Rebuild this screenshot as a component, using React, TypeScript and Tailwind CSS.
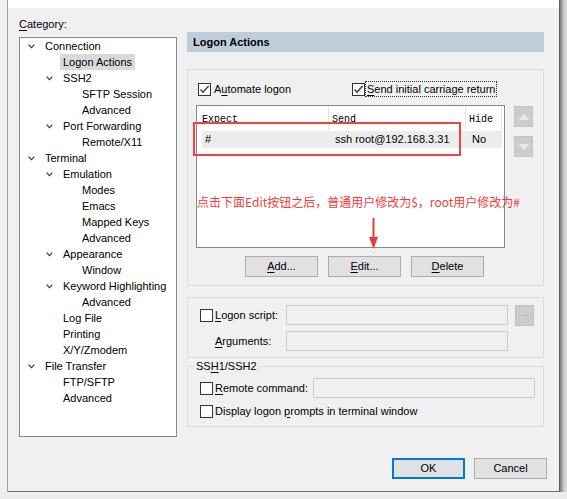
import type * as React from "react";

type Node = { t: string; l: 0 | 1 | 2; c?: boolean; sel?: boolean };

const tree: Node[] = [
  { t: "Connection", l: 0, c: true },
  { t: "Logon Actions", l: 1, sel: true },
  { t: "SSH2", l: 1, c: true },
  { t: "SFTP Session", l: 2 },
  { t: "Advanced", l: 2 },
  { t: "Port Forwarding", l: 1, c: true },
  { t: "Remote/X11", l: 2 },
  { t: "Terminal", l: 0, c: true },
  { t: "Emulation", l: 1, c: true },
  { t: "Modes", l: 2 },
  { t: "Emacs", l: 2 },
  { t: "Mapped Keys", l: 2 },
  { t: "Advanced", l: 2 },
  { t: "Appearance", l: 1, c: true },
  { t: "Window", l: 2 },
  { t: "Keyword Highlighting", l: 1, c: true },
  { t: "Advanced", l: 2 },
  { t: "Log File", l: 1 },
  { t: "Printing", l: 1 },
  { t: "X/Y/Zmodem", l: 1 },
  { t: "File Transfer", l: 0, c: true },
  { t: "FTP/SFTP", l: 1 },
  { t: "Advanced", l: 1 },
];

const indent = ["pl-[8px]", "pl-[26px]", "pl-[45px]"];

function Chevron() {
  return (
    <svg width="8" height="5" viewBox="0 0 8 5" className="block">
      <polyline points="0.6,0.6 3.5,3.6 6.4,0.6" fill="none" stroke="#3c3c3c" strokeWidth="1.2" />
    </svg>
  );
}

function Check({ on = false }: { on?: boolean }) {
  return (
    <span className="inline-flex h-[13px] w-[13px] shrink-0 items-center justify-center border border-[#333] bg-white">
      {on ? (
        <svg width="11" height="11" viewBox="0 0 11 11">
          <polyline points="1.5,5.5 4,8.2 9.6,2" fill="none" stroke="#3a3a3a" strokeWidth="1.3" />
        </svg>
      ) : null}
    </span>
  );
}

function U({ children }: { children: React.ReactNode }) {
  return <span className="underline underline-offset-[2px]">{children}</span>;
}

function Btn({ children, def = false }: { children: React.ReactNode; def?: boolean }) {
  return (
    <div
      className={
        def
          ? "flex h-[21px] w-[73px] items-center justify-center border-2 border-[#0078d7] bg-[#e1e1e1]"
          : "flex h-[21px] w-[73px] items-center justify-center border border-[#adadad] bg-[#e1e1e1]"
      }
    >
      {children}
    </div>
  );
}

function Field({ w }: { w: string }) {
  return <div className={`h-[20px] border border-[#cccccc] bg-[#f0f0f0] ${w}`} />;
}

function Arrow({ up }: { up?: boolean }) {
  return (
    <div className="flex h-[21px] w-[19px] items-center justify-center border border-[#c4c4c4] bg-[#cccccc]">
      <svg width="10" height="6" viewBox="0 0 10 6">
        <polygon points={up ? "0,6 10,6 5,0" : "0,0 10,0 5,6"} fill="#ececec" />
      </svg>
    </div>
  );
}

export default function App() {
  return (
    <div className="relative flex h-[499px] w-[567px] flex-col overflow-hidden bg-[#e8e8e8] font-['Liberation_Sans',Arial,sans-serif] text-[11px] text-black">
      <div className="flex h-[492px]">
        <div className="w-[7px] bg-[#f0f0f0]" />
        <div className="flex w-[553px] flex-col border-x border-b border-l-[#a0a0a0] border-r-[#5f5f5f] border-b-[#6f6f6f] bg-[#f0f0f0]">
          <div className="h-[8px] bg-white" />
          <div className="flex pl-[11px]">
            {/* category tree */}
            <div className="w-[158px] pt-[8px]">
              <div className="h-[16px] leading-[16px]">
                <U>C</U>ategory:
              </div>
              <div className="mt-[5px] h-[400px] border border-[#828790] bg-white">
                {tree.map((n, i) => (
                  <div key={i} className={`flex h-[16px] items-center ${indent[n.l]}`}>
                    <div className="flex w-[17px] items-center">{n.c ? <Chevron /> : null}</div>
                    <span
                      className={
                        n.sel
                          ? "-ml-[3px] whitespace-nowrap bg-[#d9d9d9] px-[3px] leading-[16px]"
                          : "-ml-[3px] whitespace-nowrap px-[3px] leading-[16px]"
                      }
                    >
                      {n.t}
                    </span>
                  </div>
                ))}
              </div>
            </div>

            {/* settings */}
            <div className="ml-[10px] w-[357px] pt-[24px]">
              <div className="h-[20px] bg-[#bfcddb] pl-[6px] font-bold leading-[20px]">Logon Actions</div>

              <div className="mt-[17px] h-[217px] border border-[#dcdcdc]">
                <div className="mt-[11px] flex h-[16px] items-center pl-[10px]">
                  <div className="flex w-[154px] items-center gap-[3px]">
                    <Check on />
                    <span>
                      A<U>u</U>tomate logon
                    </span>
                  </div>
                  <div className="flex items-center">
                    <Check on />
                    <span className="h-[16px] border border-dotted border-[#333] px-[1px] leading-[14px]">
                      <U>S</U>end initial carriage return
                    </span>
                  </div>
                </div>

                <div className="mt-[8px] flex pl-[8px]">
                  <div className="h-[143px] w-[309px] border border-[#828790] bg-white">
                    <div className="flex h-[24px] font-['Liberation_Mono',monospace] text-[10px]">
                      <div className="flex w-[132px] items-center border-r border-[#e5e5e5] pl-[5px] pt-[2px]">Expect</div>
                      <div className="flex w-[137px] items-center border-r border-[#e5e5e5] pl-[3px] pt-[2px]">Send</div>
                      <div className="flex w-[36px] items-center border-r border-[#e5e5e5] pl-[3px] pt-[2px]">Hide</div>
                    </div>
                    <div className="ml-[5px] mt-[1px] flex h-[17px] w-[300px] items-center bg-[#ececec]">
                      <div className="w-[130px] pl-[3px]">#</div>
                      <div className="w-[137px] pl-[3px]">ssh root@192.168.3.31</div>
                      <div className="pl-[3px]">No</div>
                    </div>
                  </div>
                  <div className="ml-[9px] flex flex-col gap-[9px] pt-[1px]">
                    <Arrow up />
                    <Arrow />
                  </div>
                </div>

                <div className="mt-[8px] flex gap-[10px] pl-[57px]">
                  <Btn>
                    <U>A</U>dd...
                  </Btn>
                  <Btn>
                    <U>E</U>dit...
                  </Btn>
                  <Btn>
                    <U>D</U>elete
                  </Btn>
                </div>
              </div>

              <div className="mt-[11px] h-[61px] border border-[#dcdcdc]">
                <div className="mt-[7px] flex h-[20px] items-center pl-[12px]">
                  <div className="flex w-[86px] items-center gap-[2px]">
                    <Check />
                    <span>
                      <U>L</U>ogon script:
                    </span>
                  </div>
                  <Field w="w-[222px]" />
                  <div className="ml-[7px] flex h-[21px] w-[19px] items-center justify-center border border-[#c0c0c0] bg-[#cccccc] pb-[3px] text-[9px] text-[#9a9a9a]">
                    ...
                  </div>
                </div>
                <div className="mt-[6px] flex h-[20px] items-center">
                  <div className="w-[98px] pl-[27px]">
                    <U>A</U>rguments:
                  </div>
                  <Field w="w-[222px]" />
                </div>
              </div>

              <div className="relative mt-[8px] h-[61px] border border-[#dcdcdc]">
                <span className="absolute -top-[9px] left-[7px] bg-[#f0f0f0] px-[1px] leading-[16px]">
                  SS<U>H</U>1/SSH2
                </span>
                <div className="mt-[11px] flex h-[20px] items-center pl-[12px]">
                  <div className="flex w-[113px] items-center gap-[2px]">
                    <Check />
                    <span>
                      <U>R</U>emote command:
                    </span>
                  </div>
                  <Field w="w-[222px]" />
                </div>
                <div className="mt-[5px] flex h-[16px] items-center gap-[2px] pl-[12px]">
                  <Check />
                  <span>
                    Display logon <U>p</U>rompts in terminal window
                  </span>
                </div>
              </div>
            </div>
          </div>

          <div className="mt-[21px] flex justify-end gap-[9px] pr-[12px]">
            <Btn def>OK</Btn>
            <Btn>Cancel</Btn>
          </div>
        </div>
        <div className="w-[7px] bg-linear-to-r from-[#7a7a7a] via-[#c4c4c4] to-[#e0e0e0]" />
      </div>
      <div className="flex-1 bg-[#ececec]" />

      {/* annotations */}
      <div className="absolute left-[193px] top-[122px] h-[34px] w-[268px] border-2 border-[#f04444]" />
      <div className="absolute left-[197px] top-[194px] whitespace-nowrap font-['Noto_Sans_CJK_SC',sans-serif] text-[12px] leading-[16px] text-[#f23c3c]">
        点击下面Edit按钮之后，普通用户修改为$，root用户修改为#
      </div>
      <svg className="absolute left-[368px] top-[218px]" width="11" height="32" viewBox="0 0 11 32">
        <line x1="5.5" y1="0" x2="5.5" y2="22" stroke="#f03a3a" strokeWidth="2" />
        <polygon points="1,19 10,19 5.5,31" fill="#f03a3a" />
      </svg>
    </div>
  );
}
